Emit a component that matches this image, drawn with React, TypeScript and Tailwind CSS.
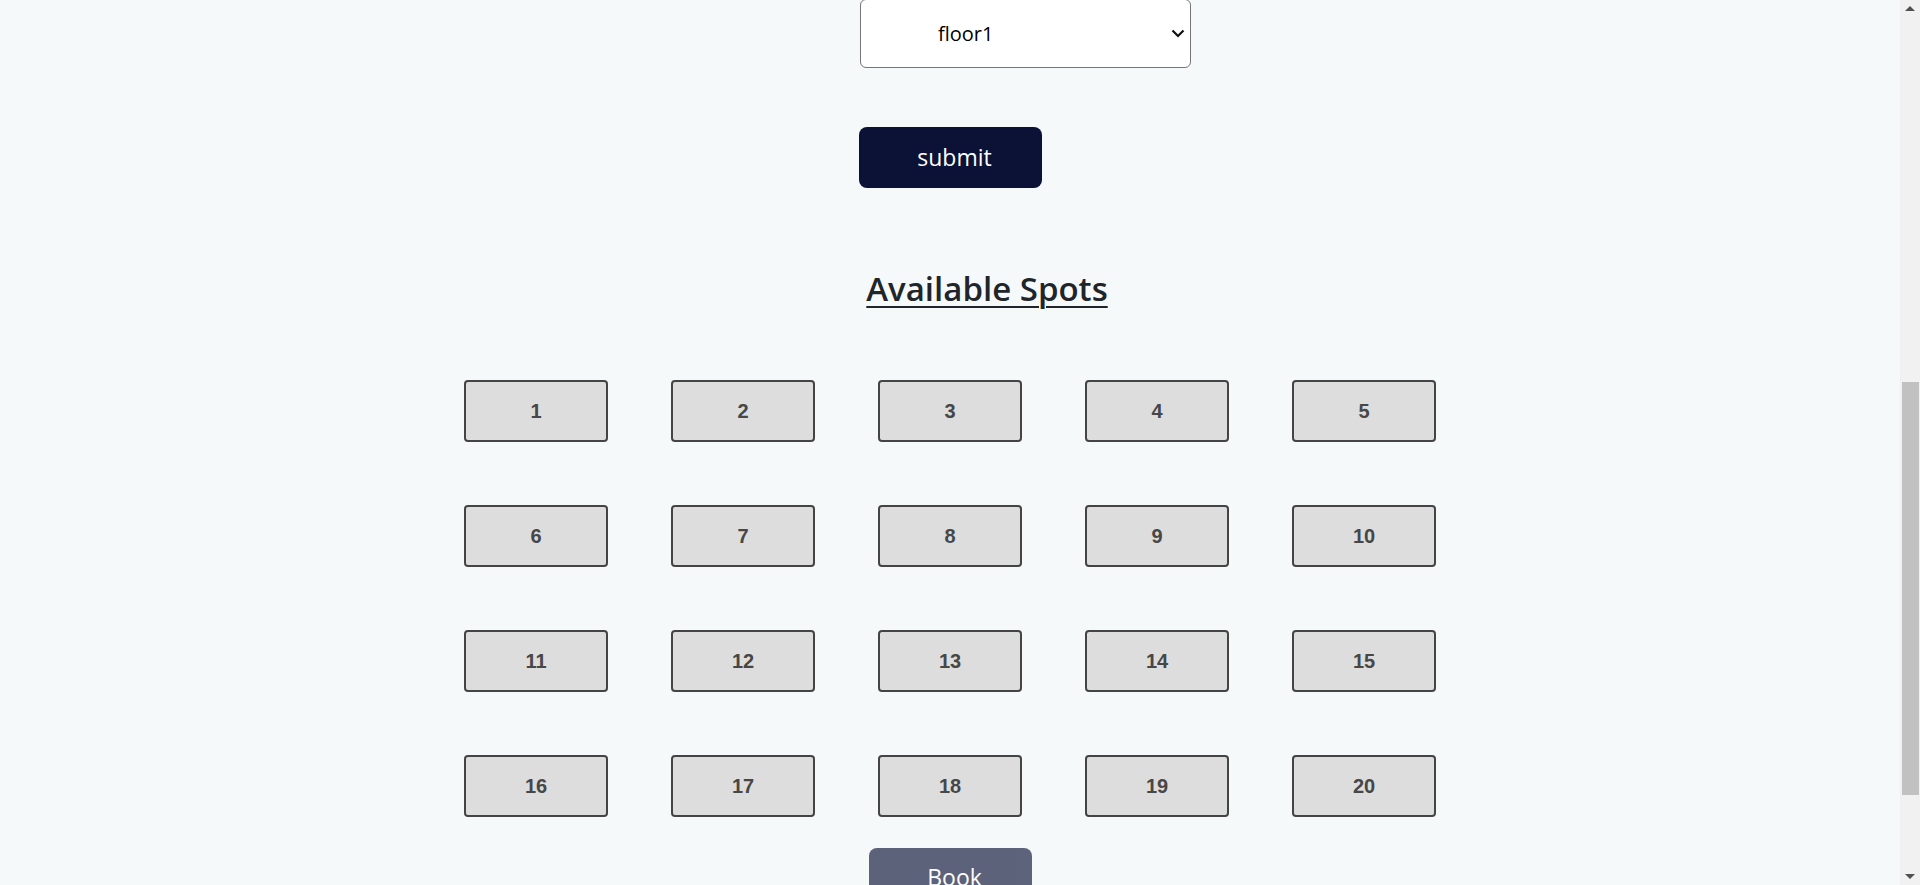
import { useLayoutEffect } from "react";

const spots = Array.from({ length: 20 }, (_, i) => i + 1);

function FakeScrollbar() {
  return (
    <div className="pointer-events-none fixed right-0 top-0 flex h-screen w-[20px] flex-col items-center bg-[#f1f1f1]">
      <div className="flex h-[17px] w-full items-center justify-center">
        <div className="h-0 w-0 border-x-[5px] border-b-[5px] border-x-transparent border-b-[#505050]" />
      </div>
      <div className="relative w-full flex-1">
        <div className="absolute left-[2px] right-[1px] top-[365px] h-[413px] bg-[#c1c1c1]" />
      </div>
      <div className="flex h-[17px] w-full items-center justify-center">
        <div className="h-0 w-0 border-x-[5px] border-t-[5px] border-x-transparent border-t-[#505050]" />
      </div>
    </div>
  );
}

export default function App() {
  useLayoutEffect(() => {
    window.scrollTo(0, 782);
  }, []);

  return (
    <div className="min-h-screen bg-[#f6f9fa] pr-[20px] font-['Open_Sans','Noto_Sans',sans-serif] text-[#212529]">
      {/* upper part of the booking form (scrolled out of view) */}
      <div className="h-[781px]" />

      <div className="flex justify-center pl-[151px]">
        <div className="relative h-[69px] w-[331px]">
          <select
            defaultValue="floor1"
            className="h-full w-full appearance-none rounded-[6px] border border-[#767676] bg-white pl-[77px] text-[20px] text-black outline-none"
          >
            <option value="floor1">floor1</option>
            <option value="floor2">floor2</option>
            <option value="floor3">floor3</option>
          </select>
          <svg
            className="pointer-events-none absolute right-[6px] top-[30px]"
            width="14"
            height="9"
            viewBox="0 0 14 9"
            fill="none"
          >
            <path d="M1.5 1.5 L7 7 L12.5 1.5" stroke="#111" strokeWidth="2.2" />
          </svg>
        </div>
      </div>

      <div className="mt-[59px] flex justify-center">
        <button className="flex h-[61px] w-[183px] items-center justify-center rounded-[8px] bg-[#0b1236] pl-[9px] text-[23px] text-white">
          submit
        </button>
      </div>

      <div className="mt-[81px] flex justify-center pl-[74px]">
        <h2 className="text-[33px] font-semibold leading-[1.2] underline decoration-2 underline-offset-[5px]">
          Available Spots
        </h2>
      </div>

      <div className="mt-[71px] flex justify-center">
        <div className="grid grid-cols-[repeat(5,144px)] gap-[63px]">
          {spots.map((n) => (
            <button
              key={n}
              className="flex h-[62px] w-[144px] items-center justify-center rounded-[4px] border-2 border-[#444444] bg-[#dddddd] font-['Liberation_Sans',Arial,sans-serif] text-[20px] font-bold text-[#474747]"
            >
              {n}
            </button>
          ))}
        </div>
      </div>

      <div className="mt-[31px] flex justify-center pb-[134px]">
        <button
          disabled
          className="flex h-[60px] w-[163px] items-center justify-center rounded-[8px] bg-[#0b1236] pl-[9px] text-[23px] text-white opacity-65"
        >
          Book
        </button>
      </div>

      <FakeScrollbar />
    </div>
  );
}
